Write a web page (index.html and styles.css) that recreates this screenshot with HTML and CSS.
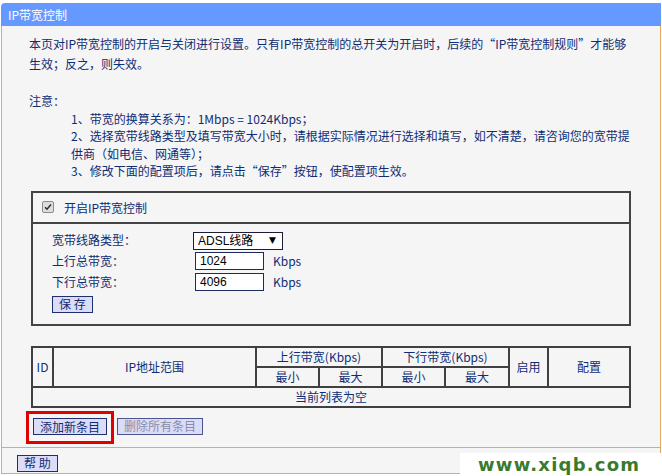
FILE: index.html
```html
<!DOCTYPE html>
<html lang="zh-CN">
<head>
<meta charset="utf-8">
<title>IP带宽控制</title>
<link rel="stylesheet" href="styles.css">
</head>
<body>
<div class="page">
  <div class="title">IP带宽控制</div>
  <div class="main">
    <p class="intro">本页对IP带宽控制的开启与关闭进行设置。只有IP带宽控制的总开关为开启时，后续的<span class="q">“</span>IP带宽控制规则<span class="q">”</span>才能够<br>生效；反之，则失效。</p>
    <div class="notes">
      <div>注意：</div>
      <ul class="note-list">
        <li>1、带宽的换算关系为：1Mbps = 1024Kbps；</li>
        <li>2、选择宽带线路类型及填写带宽大小时，请根据实际情况进行选择和填写，如不清楚，请咨询您的宽带提<br>供商（如电信、网通等）；</li>
        <li>3、修改下面的配置项后，请点击<span class="q">“</span>保存<span class="q">”</span>按钮，使配置项生效。</li>
      </ul>
    </div>
    <div class="box">
      <div class="box-head">
        <span class="check"><svg viewBox="0 0 12 12" width="12" height="12"><path d="M2.5 6.2 L4.8 8.6 L9.6 3" fill="none" stroke="#2b2b2b" stroke-width="1.8"/></svg></span>
        <span>开启IP带宽控制</span>
      </div>
      <div class="box-body">
        <div class="form">
          <span>宽带线路类型：</span>
          <span class="sel"><select><option>ADSL线路</option></select><span class="arrow">▼</span></span>
          <span></span>
          <span>上行总带宽：</span>
          <input class="num" type="text" value="1024">
          <span class="unit">Kbps</span>
          <span>下行总带宽：</span>
          <input class="num" type="text" value="4096">
          <span class="unit">Kbps</span>
        </div>
        <button class="btn btn-save">保 存</button>
      </div>
    </div>
    <table class="rules">
      <colgroup>
        <col class="c-id"><col class="c-ip"><col class="c-n"><col class="c-n"><col class="c-n"><col class="c-n2"><col class="c-en"><col class="c-cfg">
      </colgroup>
      <tr class="r">
        <td rowspan="2">ID</td>
        <td rowspan="2">IP地址范围</td>
        <td colspan="2">上行带宽(Kbps)</td>
        <td colspan="2">下行带宽(Kbps)</td>
        <td rowspan="2">启用</td>
        <td rowspan="2">配置</td>
      </tr>
      <tr class="r">
        <td>最小</td><td>最大</td><td>最小</td><td>最大</td>
      </tr>
      <tr class="r">
        <td colspan="8">当前列表为空</td>
      </tr>
    </table>
    <div class="actions">
      <span class="hl"><button class="btn">添加新条目</button></span>
      <button class="btn btn-del" disabled>删除所有条目</button>
    </div>
  </div>
  <div class="help"><button class="btn">帮 助</button></div>
</div>
<div class="watermark">www.xiqb.com</div>
</body>
</html>
```
FILE: styles.css
```css
html, body {
  margin: 0;
  padding: 0;
  background: #ffffff;
}
body {
  position: relative;
  width: 662px;
  height: 476px;
  overflow: hidden;
  font-family: "Noto Sans CJK SC", sans-serif;
  font-size: 12px;
  color: #0e2d74;
}
.page {
  width: 660px;
  margin: 3px 0 0 1px;
}
.title {
  height: 23px;
  line-height: 23px;
  background: #6699ff;
  color: #ffffff;
  padding-left: 7px;
  border-radius: 4px 0 0 0;
}
.main {
  background: #f5f5f5;
  border-left: 1px solid #e2aa5c;
  border-right: 1px solid #e2aa5c;
  border-bottom: 1px solid #e2aa5c;
  padding: 8px 27px 3px 27px;
}
.intro {
  margin: 0;
  line-height: 20px;
}
.q {
  display: inline-block;
  width: 12px;
  text-align: center;
}
.notes {
  margin-top: 18px;
  line-height: 17.5px;
}
.note-list {
  list-style: none;
  margin: 0;
  padding: 0 0 0 42px;
}
.box {
  box-sizing: border-box;
  width: 600px;
  margin: 11px 0 0 2px;
  border: 2px solid #444444;
}
.box-head {
  height: 29px;
  display: flex;
  align-items: center;
  gap: 10px;
  padding-left: 9px;
  border-bottom: 2px solid #444444;
}
.check {
  box-sizing: border-box;
  width: 12px;
  height: 12px;
  border: 1px solid #8c8c8c;
  border-radius: 2px;
  background: #dedede;
  display: flex;
  align-items: center;
  justify-content: center;
}
.check svg {
  width: 10px;
  height: 10px;
}
.box-body {
  padding: 7px 0 11px 19px;
}
.form {
  display: grid;
  grid-template-columns: 141px 80px auto;
  grid-auto-rows: 18px;
  row-gap: 3px;
  align-items: center;
}
.sel {
  position: relative;
  display: block;
  width: 90px;
  height: 18px;
}
.sel select {
  box-sizing: border-box;
  width: 90px;
  height: 18px;
  margin: 0;
  padding: 0 0 0 4px;
  appearance: none;
  -webkit-appearance: none;
  border: 1px solid #1b1b3a;
  border-radius: 0;
  background: #ffffff;
  font-family: "Liberation Sans", "Noto Sans CJK SC", sans-serif;
  font-size: 12px;
  color: #000000;
}
.arrow {
  position: absolute;
  right: 7px;
  top: 3px;
  font-size: 9px;
  line-height: 12px;
  color: #000000;
  font-family: "DejaVu Sans", sans-serif;
}
.num {
  box-sizing: border-box;
  width: 69px;
  height: 18px;
  margin: 0 0 0 2px;
  padding: 0 0 0 4px;
  border: 1px solid #1b2b5b;
  border-radius: 0;
  background: #ffffff;
  font-family: "Liberation Sans", sans-serif;
  font-size: 12px;
  color: #000000;
  outline: none;
}
.unit {
  padding-left: 0;
}
.btn {
  box-sizing: border-box;
  height: 17px;
  padding: 0 6px;
  margin: 0;
  border: 1px solid #1e2f70;
  border-radius: 0;
  background: #dcdcf8;
  font-family: "Noto Sans CJK SC", sans-serif;
  font-size: 12px;
  line-height: 14px;
  color: #0e2d74;
}
.btn:disabled {
  color: #8a8ca8;
  border-color: #4a5590;
}
.btn-save {
  display: block;
  margin-top: 5px;
}
.rules {
  width: 600px;
  margin: 20px 0 0 2px;
  border-collapse: collapse;
  table-layout: fixed;
}
.rules td {
  border: 2px solid #404040;
  padding: 0;
  text-align: center;
  vertical-align: middle;
  line-height: 14px;
}
.rules .r {
  height: 20px;
}
.c-id { width: 21px; }
.c-ip { width: 203px; }
.c-n { width: 63px; }
.c-n2 { width: 64px; }
.c-en { width: 39px; }
.c-cfg { width: 82px; }
.actions {
  display: flex;
  align-items: flex-start;
  margin: 3px 0 0 -3px;
}
.hl {
  display: block;
  border: 3px solid #e00000;
  padding: 4px 4px 6px 4px;
}
.btn-del {
  margin: 7px 0 0 3px;
}
.help {
  height: 26px;
  box-sizing: border-box;
  background: #f5f5f5;
  border-left: 1px solid #e2aa5c;
  border-right: 1px solid #e2aa5c;
  border-bottom: 1px solid #e2aa5c;
  padding: 6px 0 0 15px;
}
.watermark {
  position: absolute;
  left: 460px;
  top: 453px;
  width: 202px;
  height: 23px;
  box-sizing: border-box;
  padding-left: 18px;
  background: #ffffff;
  font-family: "DejaVu Sans", sans-serif;
  font-weight: bold;
  font-size: 18px;
  letter-spacing: 1.2px;
  line-height: 23px;
  color: #3a7a2c;
}
```
